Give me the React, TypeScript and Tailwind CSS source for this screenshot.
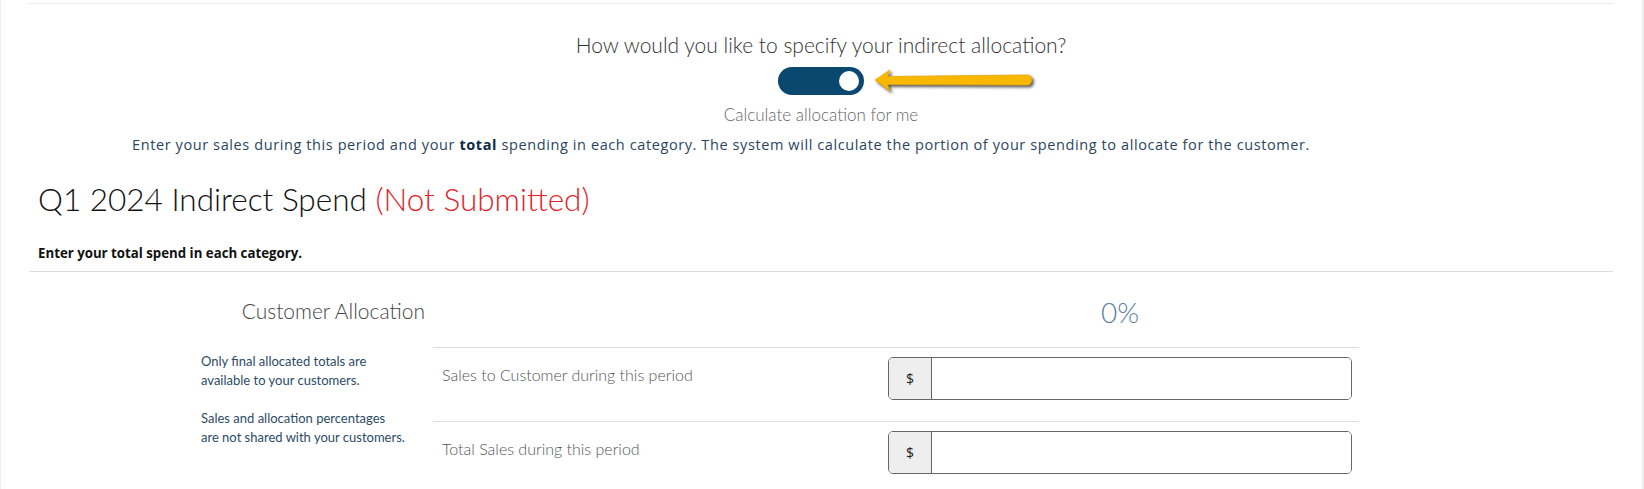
import React from "react";

const sans = "font-['Lato','Liberation_Sans',sans-serif]";
const open = "font-['Open_Sans','Liberation_Sans',sans-serif]";

function Toggle() {
  return (
    <div className="relative">
      <div className="flex h-[28px] w-[86px] items-center justify-end rounded-full bg-[#0b4870] pr-[5px]">
        <div className="h-[20px] w-[20px] rounded-full bg-white" />
      </div>
      {/* annotation arrow pointing at the switch */}
      <svg
        className="absolute left-[95px] top-[2px] drop-shadow-[2px_2px_1.5px_rgba(0,0,0,0.65)]"
        width="162"
        height="24"
        viewBox="0 0 162 24"
      >
        <path
          d="M2 11 L17 1 L14.5 7.5 L154 6 Q158.5 6 158.5 11 Q158.5 16 154 16 L14.5 15.5 L17 22 Z"
          fill="#f9b800"
          stroke="#e9a800"
          strokeWidth="0.8"
          strokeLinejoin="round"
        />
      </svg>
    </div>
  );
}

function MoneyInput() {
  return (
    <div className="flex h-[43px] w-[464px] overflow-hidden rounded-[5px] border border-[#666]">
      <div className={`${open} flex w-[43px] items-center justify-center border-r border-[#666] bg-[#eee] text-[14px] text-[#222]`}>
        $
      </div>
      <div className="flex-1 bg-white" />
    </div>
  );
}

function FormRow({ label }: { label: string }) {
  return (
    <div className="flex h-[74px] items-start border-t border-[#ddd] pt-[9px]">
      <div className="flex h-[36px] flex-1 items-center pl-[9px] text-[16px] font-light text-[#555]">
        {label}
      </div>
      <div className="mr-[7px]">
        <MoneyInput />
      </div>
    </div>
  );
}

export default function App() {
  return (
    <div className={`${sans} min-h-screen w-full border-l border-r-2 border-[#eee] bg-white`}>
      <div className="ml-[28px] mr-[29px] pt-[3px]">
        <div className="border-t border-[#e9e9e9]" />

        <div className="flex flex-col items-center">
          <h2 className="mt-[26px] text-[21px] font-light leading-[30px] text-[#333]">
            How would you like to specify your indirect allocation?
          </h2>
          <div className="mt-[7px]">
            <Toggle />
          </div>
          <div className="mt-[8px] text-[17px] font-light leading-[24px] text-[#666]">
            Calculate allocation for me
          </div>
        </div>
        <p className={`${open} ml-[103px] mt-[8px] text-[14.5px] leading-[20px] tracking-[0.6px] text-[#2b4560]`}>
          Enter your sales during this period and your <b className="font-bold text-[#0b2a4a]">total</b> spending in each
          category. The system will calculate the portion of your spending to allocate for the customer.
        </p>

        <div className="pl-[9px]">
          <h1 className="mt-[22px] text-[31.5px] font-light leading-[44px] text-[#111]">
            Q1 2024 Indirect Spend <span className="text-[#e0242a]">(Not Submitted)</span>
          </h1>
          <div className={`${open} mt-[22px] text-[13.25px] font-bold leading-[20px] text-[#111]`}>
            Enter your total spend in each category.
          </div>
        </div>
        <div className="mt-[8px] border-t border-[#ddd]" />

        <div className="flex pl-[172px]">
          <div className="w-[232px] pr-[8px]">
            <div className="mt-[24px] text-right text-[21px] font-light leading-[30px] text-[#444]">
              Customer Allocation
            </div>
            <div className="mt-[26px] text-[13px] leading-[19px] text-[#2d4b66]">
              <p>
                Only final allocated totals are
                <br />
                available to your customers.
              </p>
              <p className="mt-[19px]">
                Sales and allocation percentages
                <br />
                are not shared with your customers.
              </p>
            </div>
          </div>
          <div className="w-[926px]">
            <div className="flex h-[75px] justify-end">
              <div className="mr-[7px] flex w-[464px] justify-center pt-[22px] text-[28px] font-light leading-[36px] text-[#5a7fa0]">
                0%
              </div>
            </div>
            <FormRow label="Sales to Customer during this period" />
            <FormRow label="Total Sales during this period" />
          </div>
        </div>
      </div>
    </div>
  );
}
